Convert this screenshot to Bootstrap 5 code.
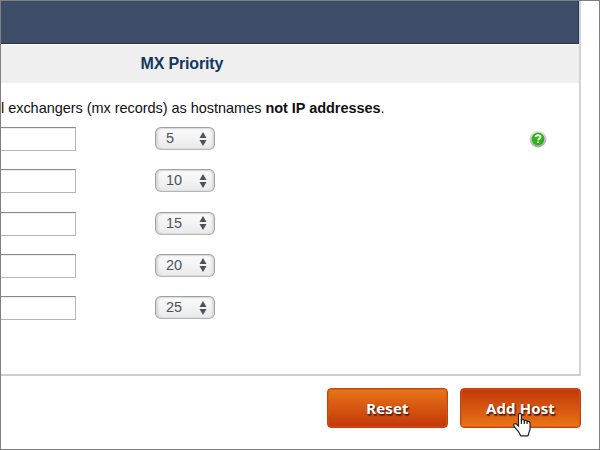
<!DOCTYPE html>
<html lang="en">
<head>
<meta charset="utf-8">
<meta name="viewport" content="width=device-width, initial-scale=1">
<title>MX Priority</title>
<link href="https://cdn.jsdelivr.net/npm/bootstrap@5.3.0/dist/css/bootstrap.min.css" rel="stylesheet">
<style>
body{font-family:"Liberation Sans",Arial,sans-serif;font-size:14.5px;line-height:18px;color:#111;background:#fff}
.frame{width:600px;height:450px;border:1px solid #808080}
.panel{width:580px;height:375px;border-right:2px solid #d3d3d3;border-bottom:2px solid #cecece}
.titlebar{height:43px;background:#3e4d67;border-bottom:1px solid #24365a;border-right:1px solid #24365a;flex:none}
.heading{height:38px;margin-top:1px;padding-left:139.5px;background:#efefef;color:#123763;font-size:16px;letter-spacing:-.16px;font-weight:700;line-height:38px;flex:none}
.note{margin-top:16px;height:28px;white-space:nowrap;letter-spacing:-.04px;flex:none}
.entry{height:42.25px;flex:none}
.host-input{width:76px;height:24px;margin-left:-1px;border:1px solid #b5b5b5;border-top-color:#8a8a8a;border-left:0;border-radius:0;box-shadow:inset 0 1px 0 #eee}
.priority{width:60px;height:23px;margin-left:79px;padding:0 7px 0 10px;border:1px solid #a2a2a2;border-top-color:#a0a0a0;border-bottom-color:#b4b4b4;border-radius:6px;background:linear-gradient(#fafafa,#f3f3f3 50%,#e9e9e9);box-shadow:inset 2px 0 2px #d5d5d5,inset -2px 0 2px #dcdcdc,inset 0 1px 1px #e2e2e2;color:#4b535d;font-size:14.5px;line-height:21px}
.help{margin-left:314px;margin-top:3px}
.actions{width:580px;margin-top:12px;gap:12px}
.action{width:121px;height:40px;padding:0 0 1px;border:1px solid #cd3f11;border-radius:4px;color:#fff;font:700 15px/36px "Noto Sans","Open Sans",sans-serif;letter-spacing:.1px;box-shadow:inset 0 0 0 1px #d4531499;text-shadow:1px 1px 1px #551b05,1px 2px 1px #7a2908}
.action:hover{color:#fff;border-color:#cd3f11}
.reset{background:linear-gradient(#e87516,#c2370a)}
.submit{background:linear-gradient(#c2370a,#e87516)}
.pointer{left:51px;top:23px}
</style>
</head>
<body>
<div class="frame overflow-hidden">
  <main class="panel d-flex flex-column">
    <div class="titlebar"></div>
    <div class="heading">MX Priority</div>
    <p class="note mb-0">l exchangers (mx records) as hostnames <b>not IP addresses</b>.</p>
    <div class="entry d-flex align-items-start">
      <input class="host-input form-control p-0" aria-label="Host 1">
      <div class="priority d-flex align-items-center justify-content-between"><span>5</span><svg width="8" height="14" fill="#4b535d"><path d="M4 0 7.5 6h-7zM4 14 .5 8h7z"/></svg></div>
      <svg class="help" width="18" height="18" viewBox="0 0 18 18">
        <defs><linearGradient id="ring" x2="0" y2="1"><stop stop-color="#eee"/><stop offset="1" stop-color="#a6a6a6"/></linearGradient></defs>
        <circle cx="9" cy="9" r="8.5" fill="url(#ring)"/><circle cx="9" cy="9" r="6.4" fill="#2bb512"/>
        <path d="M6.5 7.1Q6.7 5.2 9.1 5.2T11.5 7.1Q11.5 8.2 10.3 8.7 9.2 9.2 9.2 10.2M9.2 11.5v1.6" fill="none" stroke="#fff" stroke-width="1.9"/>
      </svg>
    </div>
    <div class="entry d-flex align-items-start">
      <input class="host-input form-control p-0" aria-label="Host 2">
      <div class="priority d-flex align-items-center justify-content-between"><span>10</span><svg width="8" height="14" fill="#4b535d"><path d="M4 0 7.5 6h-7zM4 14 .5 8h7z"/></svg></div>
    </div>
    <div class="entry d-flex align-items-start">
      <input class="host-input form-control p-0" aria-label="Host 3">
      <div class="priority d-flex align-items-center justify-content-between"><span>15</span><svg width="8" height="14" fill="#4b535d"><path d="M4 0 7.5 6h-7zM4 14 .5 8h7z"/></svg></div>
    </div>
    <div class="entry d-flex align-items-start">
      <input class="host-input form-control p-0" aria-label="Host 4">
      <div class="priority d-flex align-items-center justify-content-between"><span>20</span><svg width="8" height="14" fill="#4b535d"><path d="M4 0 7.5 6h-7zM4 14 .5 8h7z"/></svg></div>
    </div>
    <div class="entry d-flex align-items-start">
      <input class="host-input form-control p-0" aria-label="Host 5">
      <div class="priority d-flex align-items-center justify-content-between"><span>25</span><svg width="8" height="14" fill="#4b535d"><path d="M4 0 7.5 6h-7zM4 14 .5 8h7z"/></svg></div>
    </div>
  </main>
  <div class="actions d-flex justify-content-end">
    <button class="btn action reset">Reset</button>
    <button class="btn action submit position-relative">Add Host
      <svg class="pointer position-absolute" width="21" height="26" viewBox="0 0 21 26"><path d="M6.5 14V3.2C6.5.8 9.4.8 9.4 3.2V8c1-1 2.8-.6 2.9.8 1-1 2.7-.5 2.8.8 1.2-.7 3 .1 3 1.8v5.2c0 2-1.4 3.3-1.7 6.3q-.1 1-1 1H9.1q-.8 0-.9-1C7.6 20 4 17.3 2 14.1c-1.2-2 1.2-3.5 2.8-1.7z" fill="#fff" stroke="#1c2027" stroke-width="1.2"/><path d="M9.4 7.5v4.5M12.3 8.5V12M15.1 9.5V12" stroke="#1c2027" stroke-width="1.2"/></svg>
    </button>
  </div>
</div>
<script src="https://cdn.jsdelivr.net/npm/bootstrap@5.3.0/dist/js/bootstrap.bundle.min.js"></script>
</body>
</html>
